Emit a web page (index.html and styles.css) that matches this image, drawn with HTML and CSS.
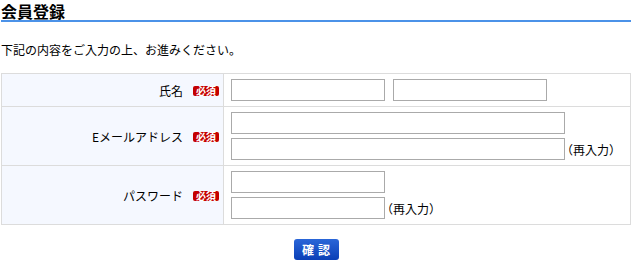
FILE: index.html
```html
<!DOCTYPE html>
<html lang="ja">
<head>
    <meta charset="UTF-8">
    <title>会員登録</title>
    <link rel="stylesheet" href="styles.css">
</head>
<body>
    <h1>会員登録</h1>
    <p class="lead">下記の内容をご入力の上、お進みください。</p>

    <form id="registerForm">
        <table class="entry">
            <tr>
                <th>氏名<span class="req">必須</span></th>
                <td>
                    <div class="line">
                        <input type="text" name="sei" class="short">
                        <input type="text" name="mei" class="short next">
                    </div>
                </td>
            </tr>
            <tr>
                <th>Eメールアドレス<span class="req">必須</span></th>
                <td>
                    <div class="line"><input type="text" name="email" class="long"></div>
                    <div class="line"><input type="text" name="email2" class="long"><span class="again">（再入力）</span></div>
                </td>
            </tr>
            <tr>
                <th>パスワード<span class="req">必須</span></th>
                <td>
                    <div class="line"><input type="password" name="pass" class="short"></div>
                    <div class="line"><input type="password" name="pass2" class="short"><span class="again">（再入力）</span></div>
                </td>
            </tr>
        </table>

        <div class="actions">
            <button type="submit">確認</button>
        </div>
    </form>
</body>
</html>
```

FILE: styles.css
```css
body {
    font-family: "Noto Sans CJK JP", "DejaVu Sans", sans-serif;
    font-size: 12px;
    color: #000;
    background-color: #fff;
    margin: 0;
    padding: 0 1px;
}
h1 {
    font-size: 16px;
    font-weight: bold;
    line-height: 17px;
    padding-top: 3px;
    margin: 0;
    border-bottom: 2px solid #4b92e8;
}
.lead {
    line-height: 16px;
    margin: 20px 0 15px;
}
.entry {
    width: 630px;
    border-collapse: collapse;
}
.entry th,
.entry td {
    border: 1px solid #dcdcdc;
    padding: 5px 7px;
}
.entry th {
    width: 209px;
    background-color: #f5f8ff;
    font-weight: normal;
    text-align: right;
    padding-left: 8px;
    padding-right: 4px;
}
.req {
    display: inline-block;
    background-color: #c40000;
    color: #fff;
    font-size: 10px;
    font-weight: bold;
    line-height: 10px;
    padding: 0 3px;
    margin-left: 10px;
    border-radius: 2px;
    vertical-align: 1px;
}
.line {
    display: flex;
    align-items: center;
}
.line + .line {
    margin-top: 4px;
}
.again {
    margin-left: -4px;
}
input {
    box-sizing: border-box;
    height: 22px;
    border: 1px solid #aaa;
    padding: 2px 4px;
    margin: 0;
    font-size: 12px;
}
.short {
    width: 154px;
}
.long {
    width: 334px;
}
.next {
    margin-left: 8px;
}
.actions {
    text-align: center;
    margin-top: 14px;
}
button {
    width: 45px;
    height: 21px;
    padding: 0 0 0 4px;
    border: none;
    border-radius: 3px;
    background: linear-gradient(#2a66d8, #0a3fb6);
    color: #fff;
    font-family: "Noto Sans CJK JP", sans-serif;
    font-size: 12px;
    font-weight: bold;
    letter-spacing: 4px;
    cursor: pointer;
}
```
